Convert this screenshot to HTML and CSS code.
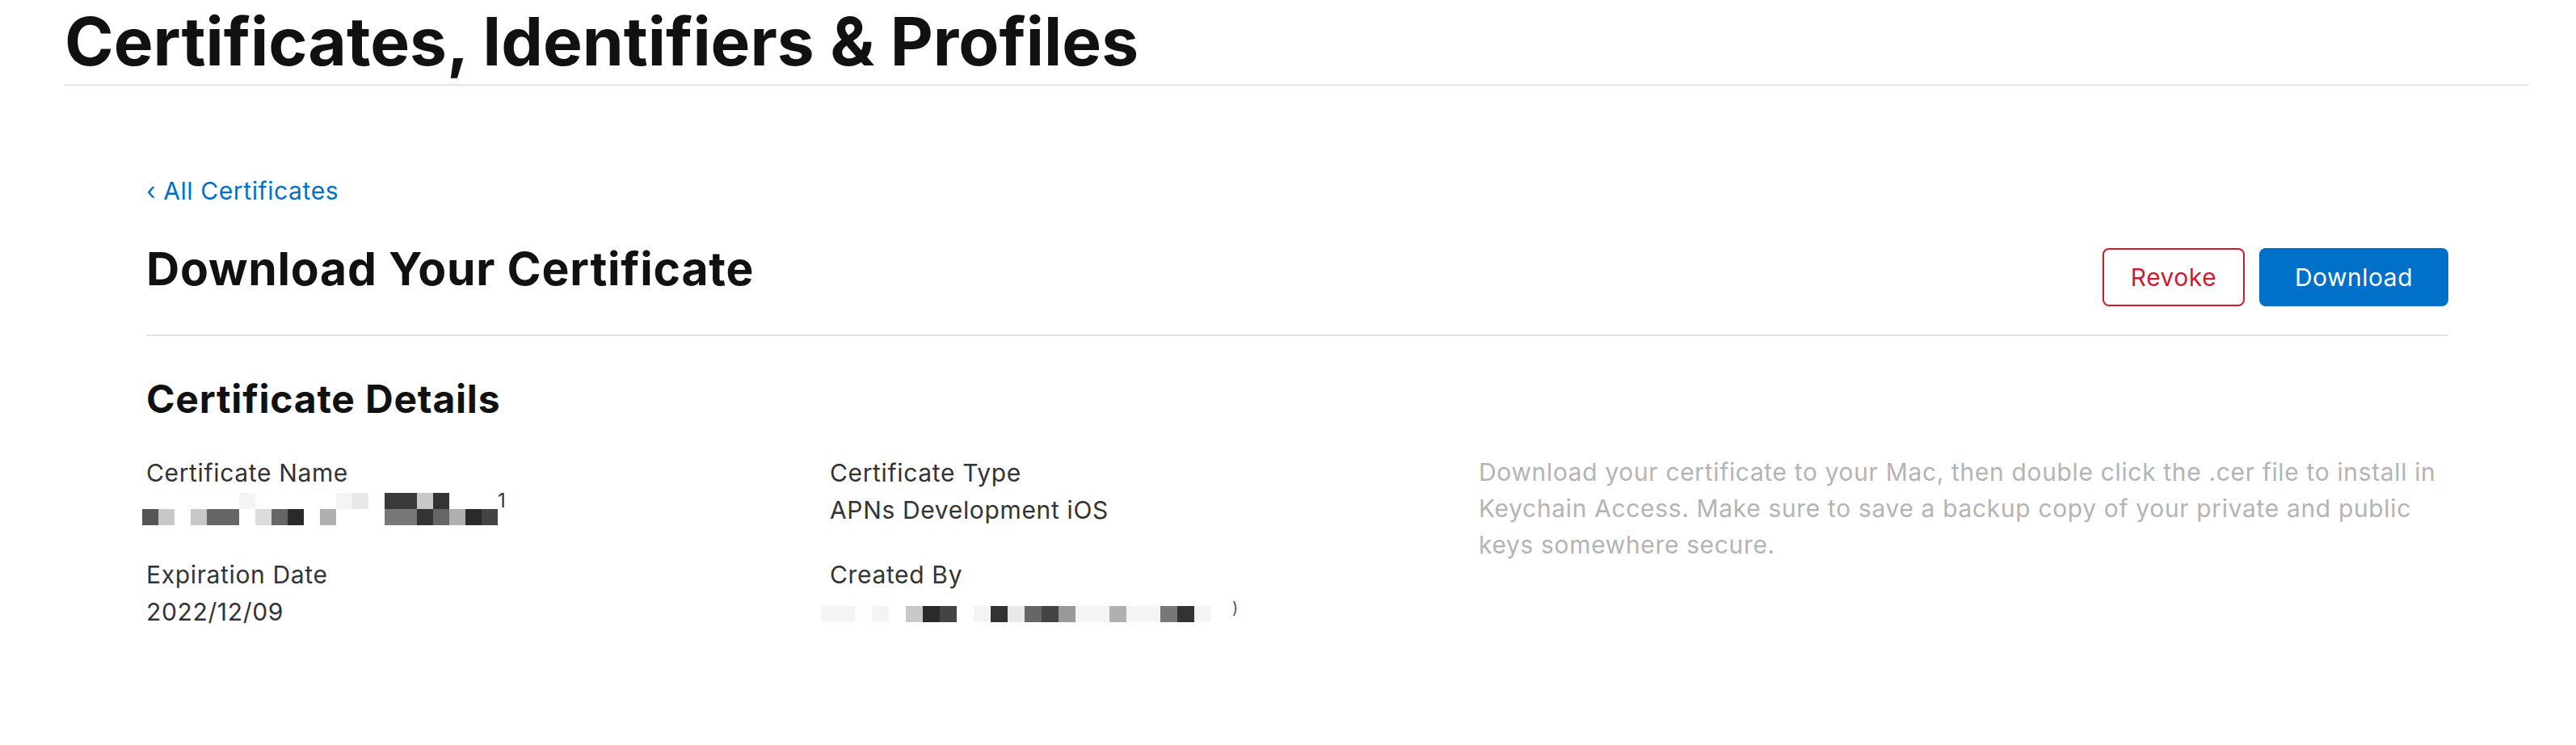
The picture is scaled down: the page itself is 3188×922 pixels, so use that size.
FILE: index.html
```html
<!DOCTYPE html>
<html lang="en">
<head>
<meta charset="utf-8">
<title>Certificates, Identifiers &amp; Profiles</title>
<link rel="stylesheet" href="styles.css">
</head>
<body>
<header class="page-header">
  <h1 class="page-title">Certificates, Identifiers &amp; Profiles</h1>
</header>
<main class="content">
  <a class="back-link" href="#"><span class="chev">‹</span> All Certificates</a>
  <div class="title-row">
    <h2 class="section-title">Download Your Certificate</h2>
    <div class="actions">
      <button class="btn btn-revoke">Revoke</button>
      <button class="btn btn-download">Download</button>
    </div>
  </div>
  <hr class="divider">
  <h3 class="details-title">Certificate Details</h3>
  <div class="details">
    <div class="col">
      <div class="field">
        <div class="label">Certificate Name</div>
        <div class="value value-mosaic">
          <div class="mosaic mosaic-2 name-mosaic">
            <i class="w"></i><i class="i"></i>
            <i class="w"></i><i class="d"></i>
            <i class="w"></i><i class="w"></i>
            <i class="w"></i><i class="d"></i>
            <i class="w"></i><i class="h"></i>
            <i class="w"></i><i class="h"></i>
            <i class="a"></i><i class="w"></i>
            <i class="w"></i><i class="c"></i>
            <i class="w"></i><i class="h"></i>
            <i class="w"></i><i class="m"></i>
            <i class="w"></i><i class="w"></i>
            <i class="w"></i><i class="e"></i>
            <i class="a"></i><i class="w"></i>
            <i class="b"></i><i class="w"></i>
            <i class="w"></i><i class="w"></i>
            <i class="k"></i><i class="g"></i>
            <i class="k"></i><i class="g"></i>
            <i class="d"></i><i class="l"></i>
            <i class="l"></i><i class="h"></i>
            <i class="w"></i><i class="e"></i>
            <i class="w"></i><i class="m"></i>
            <i class="w"></i><i class="j"></i>
          </div>
          <span class="tail">1</span>
        </div>
      </div>
      <div class="field">
        <div class="label">Expiration Date</div>
        <div class="value">2022/12/09</div>
      </div>
    </div>
    <div class="col">
      <div class="field">
        <div class="label">Certificate Type</div>
        <div class="value">APNs Development iOS</div>
      </div>
      <div class="field">
        <div class="label">Created By</div>
        <div class="value value-mosaic">
          <div class="mosaic mosaic-1 creator-mosaic">
            <i class="a"></i><i class="a"></i><i class="w"></i><i class="a"></i><i class="w"></i>
            <i class="d"></i><i class="m"></i><i class="j"></i><i class="w"></i><i class="a"></i>
            <i class="l"></i><i class="b"></i><i class="h"></i><i class="j"></i><i class="f"></i>
            <i class="a"></i><i class="a"></i><i class="e"></i><i class="a"></i><i class="a"></i>
            <i class="g"></i><i class="l"></i><i class="a"></i>
          </div>
          <span class="tail tail-paren">)</span>
        </div>
      </div>
    </div>
    <p class="help">Download your certificate to your Mac, then double click the .cer file to install in Keychain Access. Make sure to save a backup copy of your private and public keys somewhere secure.</p>
  </div>
</main>
</body>
</html>
```
FILE: styles.css
```css
* { box-sizing: border-box; }

body {
  margin: 0;
  background: #ffffff;
  font-family: Inter, "Liberation Sans", Arial, sans-serif;
  color: #111111;
}

.page-header {
  margin: 0 58px 0 80px;
  border-bottom: 2px solid #e6e6e6;
}

.page-title {
  margin: 0;
  font-size: 82px;
  line-height: 104px;
  font-weight: 700;
  color: #111111;
}

.content {
  width: 3030px;
  padding: 112px 0 0 181px;
}

.back-link {
  display: block;
  font-size: 30px;
  line-height: 36px;
  letter-spacing: 0.6px;
  color: #0070c9;
  text-decoration: none;
}

.title-row {
  display: flex;
  justify-content: space-between;
  align-items: flex-start;
  margin-top: 45px;
}

.section-title {
  margin: 0;
  font-size: 57px;
  line-height: 68px;
  font-weight: 700;
  letter-spacing: 0.8px;
  color: #111111;
}

.actions {
  display: flex;
  gap: 18px;
  margin-top: 8px;
}

.btn {
  height: 72px;
  padding: 0;
  border-radius: 8px;
  font-family: inherit;
  font-size: 30px;
  letter-spacing: 0.5px;
  line-height: 1;
  cursor: pointer;
}

.btn-revoke {
  width: 176px;
  background: #ffffff;
  border: 2px solid #d01a30;
  color: #d01a30;
}

.btn-download {
  width: 234px;
  background: #0070c9;
  border: none;
  color: #ffffff;
}

.divider {
  margin: 35px 0 0;
  border: 0;
  border-top: 2px solid #e3e3e3;
  height: 0;
}

.details-title {
  margin: 50px 0 0;
  font-size: 48px;
  line-height: 56px;
  font-weight: 700;
  letter-spacing: 0.8px;
  color: #111111;
}

.details {
  display: grid;
  grid-template-columns: 846px 803px 1fr;
  margin-top: 40px;
}

.col {
  display: flex;
  flex-direction: column;
  gap: 34px;
}

.label, .value {
  font-size: 30px;
  line-height: 46px;
  letter-spacing: 0.65px;
  color: #333333;
}

.value-mosaic {
  display: flex;
  align-items: flex-start;
  height: 46px;
}

.mosaic {
  display: grid;
  grid-auto-flow: column;
}

.mosaic-2 { grid-template-rows: 20px 20px; grid-auto-columns: 20px; }
.mosaic-1 { grid-template-rows: 20px; grid-auto-columns: 21px; }

.name-mosaic { margin: 2px 0 0 -5px; }
.creator-mosaic { margin: 16px 0 0 -11px; }

.tail {
  font-size: 24px;
  line-height: 24px;
  color: #333333;
}
.tail-paren { margin: 6px 0 0 26px; color: #555555; font-size: 20px; }

.mosaic i { display: block; }
.mosaic .w { background: #ffffff; }
.mosaic .a { background: #f4f4f4; }
.mosaic .b { background: #e8e8e8; }
.mosaic .c { background: #dddddd; }
.mosaic .d { background: #c8c8c8; }
.mosaic .e { background: #b0b0b0; }
.mosaic .f { background: #999999; }
.mosaic .g { background: #777777; }
.mosaic .h { background: #666666; }
.mosaic .i { background: #555555; }
.mosaic .j { background: #444444; }
.mosaic .k { background: #3a3a3a; }
.mosaic .l { background: #333333; }
.mosaic .m { background: #2a2a2a; }

.help {
  margin: 0;
  font-size: 30px;
  line-height: 45px;
  letter-spacing: 0.65px;
  color: #b4b4b4;
}
```
